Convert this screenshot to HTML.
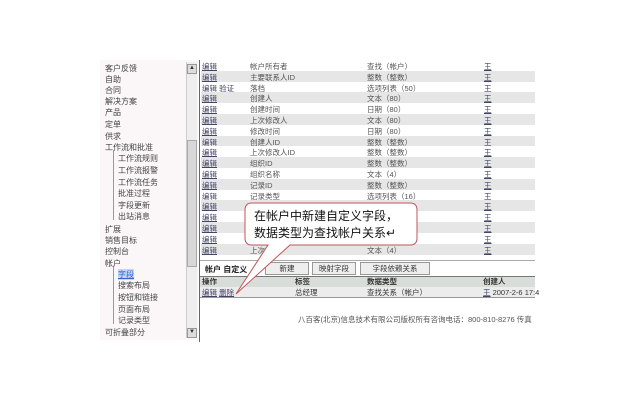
<!DOCTYPE html>
<html><head><meta charset="utf-8"><style>
body{margin:0;width:640px;height:400px;background:#fff;position:relative;overflow:hidden;font-family:"Liberation Sans","Noto Sans CJK SC",sans-serif;font-size:8px;color:#333}
.a{position:absolute;white-space:nowrap}
.side{position:absolute;left:100px;top:60px;width:98px;height:280px;background:#fbf7f9}
.si{position:absolute;font-size:8px;color:#444}
.r{position:absolute;left:201px;width:334px;height:11px}
.r span{position:absolute;top:1px;font-size:7.5px;color:#555}
u{color:#446}
</style></head><body>
<div class="side"></div>
<div class="a" style="left:186px;top:62px;width:10px;height:276px;background:#eee;border-left:1px solid #ccc"></div>
<div class="a" style="left:187px;top:140px;width:8px;height:125px;background:#d8d8d8;border:1px solid #aaa"></div>
<div class="a" style="left:187px;top:64px;width:8px;height:8px;background:#ddd;border:1px solid #999;font-size:6px;text-align:center">▲</div>
<div class="a" style="left:187px;top:328px;width:8px;height:8px;background:#ddd;border:1px solid #999;font-size:6px;text-align:center">▼</div>
<div class="a" style="left:199px;top:60px;width:1px;height:282px;background:#666"></div>
<div class="a" style="left:113px;top:150px;width:1px;height:70px;background:#999"></div>
<div class="a" style="left:113px;top:266px;width:1px;height:58px;background:#999"></div>
<div id="s"></div>
<div id="t"></div>
<div class="a" style="left:200px;top:260px;width:335px;height:1px;background:#aaa"></div>
<div class="a" style="left:205px;top:264px;font-size:8px;font-weight:bold;color:#222">帐户 自定义</div>
<div class="a" style="left:265px;top:262px;width:42px;height:11px;background:#eee;border:1px solid #999;text-align:center;font-size:7.5px">新建</div>
<div class="a" style="left:312px;top:262px;width:42px;height:11px;background:#eee;border:1px solid #999;text-align:center;font-size:7.5px">映射字段</div>
<div class="a" style="left:360px;top:262px;width:68px;height:11px;background:#eee;border:1px solid #999;text-align:center;font-size:7.5px">字段依赖关系</div>
<div class="a" style="left:200px;top:276px;width:335px;height:10px;background:#d9ddd9;border-top:1px solid #777"></div>
<div class="a" style="left:202px;top:276px;font-weight:bold;font-size:7.5px">操作</div>
<div class="a" style="left:295px;top:276px;font-weight:bold;font-size:7.5px">标签</div>
<div class="a" style="left:367px;top:276px;font-weight:bold;font-size:7.5px">数据类型</div>
<div class="a" style="left:483px;top:276px;font-weight:bold;font-size:7.5px">创建人</div>
<div class="a" style="left:200px;top:287px;width:335px;height:10px;background:#ececec;border-bottom:1px solid #999"></div>
<div class="a" style="left:202px;top:287px;font-size:7.5px"><u>编辑</u> <u>删除</u></div>
<div class="a" style="left:295px;top:287px;font-size:7.5px">总经理</div>
<div class="a" style="left:367px;top:287px;font-size:7.5px">查找关系（帐户）</div>
<div class="a" style="left:483px;top:287px;font-size:7.5px"><u>王</u> 2007-2-6 17:4</div>
<div class="a" style="left:298px;top:314px;font-size:7.5px;color:#555">八百客(北京)信息技术有限公司版权所有咨询电话：800-810-8276 传真</div>
<svg class="a" style="left:0;top:0" width="640" height="400">
<path d="M252,203 H410 Q417,203 417,210 V238 Q417,245 410,245 H290 L236,294 L268,245 H252 Q245,245 245,238 V210 Q245,203 252,203 Z" fill="#fff" stroke="#c0555a" stroke-width="1"/>
</svg>
<div class="a" style="left:254px;top:208px;font-size:12px;color:#111;line-height:17px">在帐户中新建自定义字段，<br>数据类型为查找帐户关系↵</div>
<script>
var s=[["客户反馈",105,68],["自助",105,79],["合同",105,90],["解决方案",105,101],["产品",105,112],["定单",105,124],["供求",105,136],["工作流和批准",105,147],["工作流规则",118,158],["工作流报警",118,170],["工作流任务",118,182],["批准过程",118,193],["字段更新",118,205],["出站消息",118,216],["扩展",105,229],["销售目标",105,240],["控制台",105,251],["帐户",105,263],["字段",118,274],["搜索布局",118,285],["按钮和链接",118,297],["页面布局",118,309],["记录类型",118,320],["可折叠部分",105,332]];
var h="";s.forEach(function(x){h+='<div class="si" style="left:'+x[1]+'px;top:'+(x[2]-5)+'px'+(x[0]=="字段"?';background:#c8d4f0;color:#36c;text-decoration:underline':'')+'">'+x[0]+'</div>'});
document.getElementById("s").innerHTML=h;
var r=[["帐户所有者","查找（帐户）"],["主要联系人ID","整数（整数）"],["落档","选项列表（50）"],["创建人","文本（80）"],["创建时间","日期（80）"],["上次修改人","文本（80）"],["修改时间","日期（80）"],["创建人ID","整数（整数）"],["上次修改人ID","整数（整数）"],["组织ID","整数（整数）"],["组织名称","文本（4）"],["记录ID","整数（整数）"],["记录类型","选项列表（16）"],["",""],["",""],["",""],["",""],["上次修改","文本（4）"]];
h="";r.forEach(function(x,i){var y=60+i*10.8;h+='<div class="r" style="top:'+y+'px;background:'+(i%2?'#e6e6e6':'#fff')+'"><span style="left:1px"><u>编辑</u>'+(i==2?' <u>验证</u>':'')+'</span><span style="left:49px">'+x[0]+'</span><span style="left:166px">'+x[1]+'</span><span style="left:283px"><u>王</u></span></div>'});
document.getElementById("t").innerHTML=h;
</script>
</body></html>
